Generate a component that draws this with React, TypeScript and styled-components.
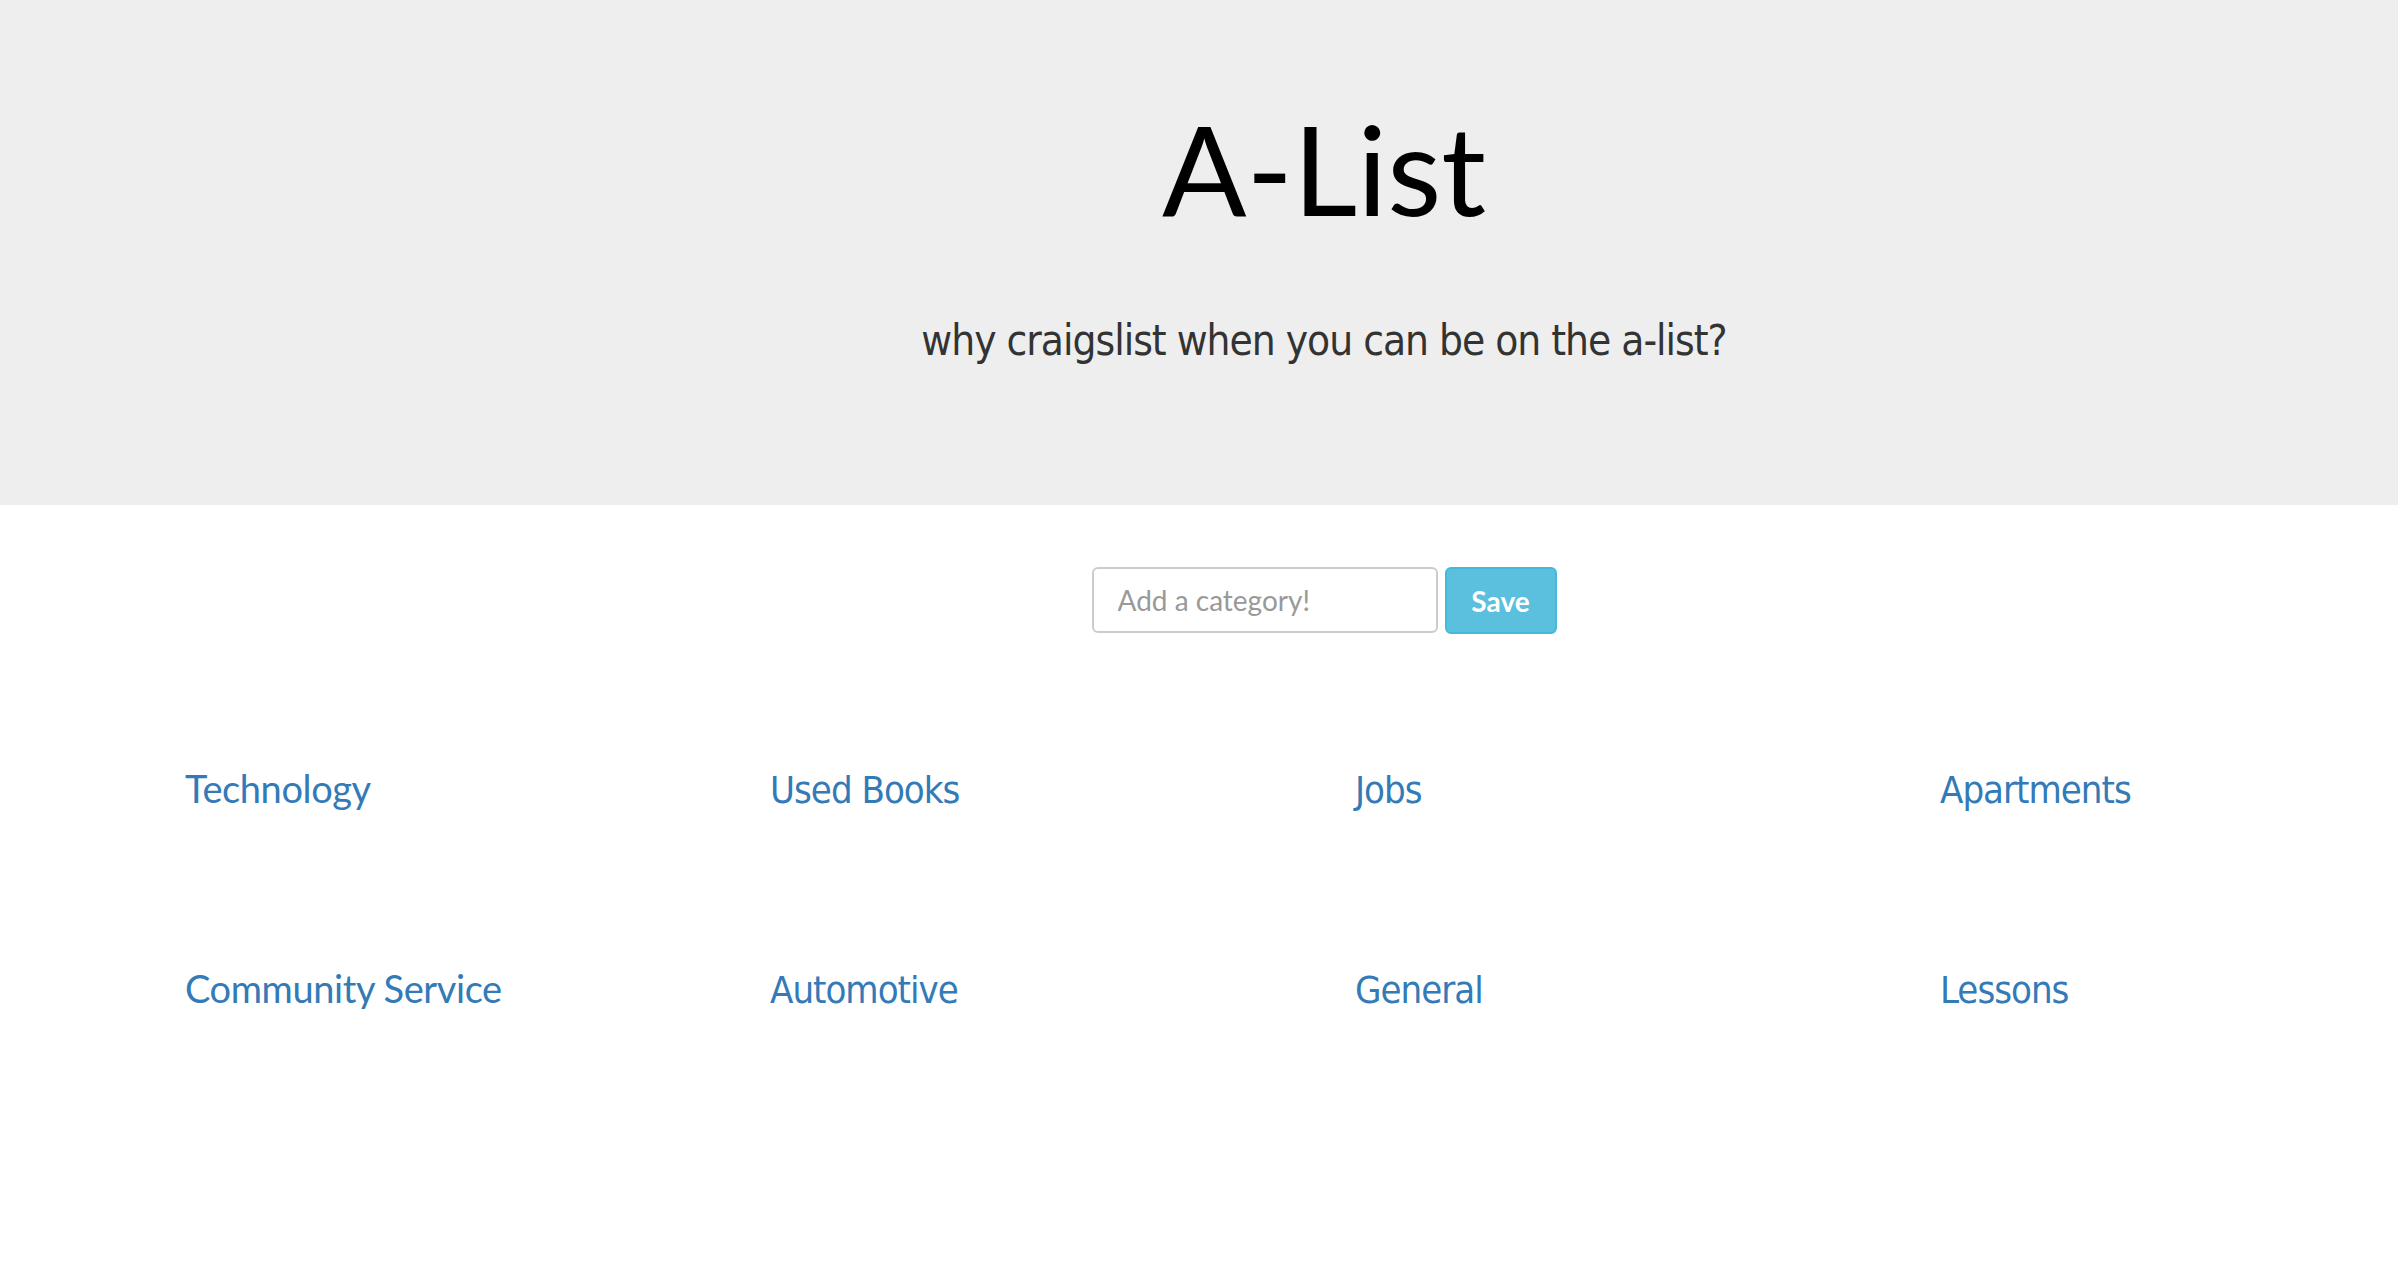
import React from "react";
import styled, { createGlobalStyle } from "styled-components";

const GlobalStyle = createGlobalStyle`
  html, body {
    margin: 0;
    padding: 0;
    background: #fff;
    font-family: Lato, "Open Sans", sans-serif;
  }
`;

const Jumbotron = styled.header`
  height: 505px;
  box-sizing: border-box;
  background-color: #eee;
  padding: 106px 0 0 250px;
  text-align: center;
`;

const Title = styled.h1`
  margin: 0;
  font-size: 125px;
  line-height: 1;
  font-weight: 400;
  color: #000;
`;

const Tagline = styled.p`
  margin: 89px 0 0;
  font-family: "Liberation Sans Narrow", "DejaVu Sans Condensed", sans-serif;
  font-size: 42px;
  letter-spacing: -1px;
  line-height: 1;
  color: #333;
`;

const Form = styled.form`
  display: flex;
  justify-content: center;
  gap: 7px;
  padding: 62px 0 0 250px;
`;

const Input = styled.input`
  width: 346px;
  height: 66px;
  box-sizing: border-box;
  border: 2px solid #ccc;
  border-radius: 6px;
  padding: 0 24px;
  font-family: Lato, sans-serif;
  font-size: 28px;
  color: #555;
  outline: none;

  &::placeholder {
    color: #999;
  }
`;

const SaveButton = styled.button`
  width: 112px;
  height: 67px;
  box-sizing: border-box;
  border: 2px solid #46b8da;
  border-radius: 6px;
  background-color: #5bc0de;
  color: #fff;
  font-family: Lato, sans-serif;
  font-size: 28px;
  font-weight: 700;
  cursor: pointer;
`;

const CategoryGrid = styled.div`
  display: grid;
  grid-template-columns: repeat(3, 585px) 1fr;
  row-gap: 160px;
  padding: 135px 0 0 185px;
`;

const CategoryLink = styled.a<{ $narrow?: boolean }>`
  display: inline-block;
  font-family: ${p => (p.$narrow ? '"Liberation Sans Narrow", "DejaVu Sans Condensed", sans-serif' : 'Lato, sans-serif')};
  font-size: 38px;
  letter-spacing: ${p => (p.$narrow ? "-1px" : "-0.4px")};
  line-height: 1;
  padding-top: ${p => (p.$narrow ? "2px" : "0")};
  color: #337ab7;
  text-decoration: none;
`;

const categories = [
  { name: "Technology", narrow: false },
  { name: "Used Books", narrow: true },
  { name: "Jobs", narrow: true },
  { name: "Apartments", narrow: true },
  { name: "Community Service", narrow: false },
  { name: "Automotive", narrow: true },
  { name: "General", narrow: true },
  { name: "Lessons", narrow: true },
];

export default function App() {
  return (
    <>
      <GlobalStyle />
      <Jumbotron>
        <Title>A-List</Title>
        <Tagline>why craigslist when you can be on the a-list?</Tagline>
      </Jumbotron>
      <Form onSubmit={e => e.preventDefault()}>
        <Input placeholder="Add a category!" />
        <SaveButton type="submit">Save</SaveButton>
      </Form>
      <CategoryGrid>
        {categories.map(c => (
          <div key={c.name}>
            <CategoryLink href="#" $narrow={c.narrow}>{c.name}</CategoryLink>
          </div>
        ))}
      </CategoryGrid>
    </>
  );
}
